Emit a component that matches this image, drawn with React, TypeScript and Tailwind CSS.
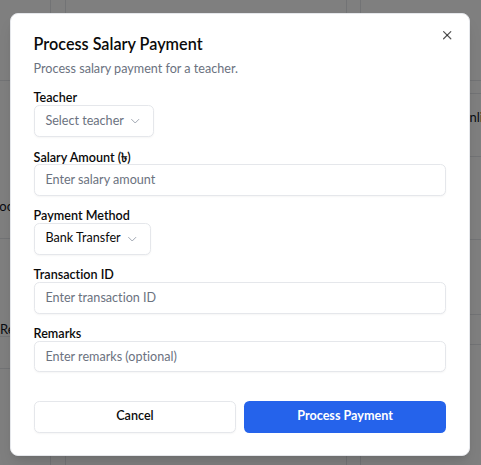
import { ChevronDown, X } from 'lucide-react';

const font = { fontFamily: 'Lato, Inter, "Noto Sans", sans-serif' };

function Label({ children }: { children: React.ReactNode }) {
  return (
    <label className="block text-[12.6px] leading-[12.6px] font-semibold text-[#0a0a0a]">
      {children}
    </label>
  );
}

function SelectBox({ value, placeholder }: { value?: string; placeholder?: string }) {
  return (
    <button
      type="button"
      className="flex h-[32.4px] items-center gap-[4px] rounded-[5.4px] border border-[#e5e7eb] bg-white pl-[10.8px] pr-[10.5px] text-[12.6px] shadow-[0_1px_2px_rgba(0,0,0,0.04)]"
    >
      <span className={value ? 'text-[#0a0a0a]' : 'text-[#6b7280]'}>{value ?? placeholder}</span>
      <ChevronDown className="h-[14.4px] w-[14.4px] text-[#9ca3af]" strokeWidth={1.6} />
    </button>
  );
}

function TextInput({ placeholder }: { placeholder: string }) {
  return (
    <input
      placeholder={placeholder}
      className="block h-[31.5px] w-full rounded-[5.4px] border border-[#e5e7eb] bg-white px-[10.8px] text-[12.6px] text-[#0a0a0a] placeholder:text-[#6b7280] shadow-[0_1px_2px_rgba(0,0,0,0.04)] outline-none"
    />
  );
}

function Background() {
  return (
    <div className="flex h-[465px] w-full bg-white text-[13px] text-[#111827]">
      <div className="flex w-[51px] flex-col border-r border-[#e5e7eb]">
        <div className="h-[81px] border-b border-[#e5e7eb]" />
        <div className="flex h-[158px] items-end border-b border-[#e5e7eb] pb-[22px]">
          <span className="-ml-[9px]">Booo</span>
        </div>
        <div className="flex h-[98px] items-end border-b border-[#e5e7eb]">
          <span className="-mb-[3px]">Reports</span>
        </div>
        <div className="h-[32px] border-b border-[#e5e7eb]" />
      </div>
      <div className="w-[15px] border-r border-[#e5e7eb]" />
      <div className="w-[281px] border-r border-[#e5e7eb]" />
      <div className="w-[14px] border-r border-[#e5e7eb]" />
      <div className="flex flex-1 flex-col">
        <div className="h-[81px] border-b border-[#e5e7eb]" />
        <div className="h-[13px] border-b border-[#e5e7eb]" />
        <div className="flex h-[63px] items-center justify-end border-b border-[#e5e7eb] pb-[14px]">
          <span className="-mr-[16px]">Online</span>
        </div>
        <div className="h-[83px] border-b border-[#e5e7eb]" />
        <div className="h-[75px] border-b border-[#e5e7eb]" />
        <div className="h-[30px] border-b border-[#e5e7eb]" />
      </div>
    </div>
  );
}

export default function App() {
  return (
    <div className="relative h-[465px] w-[481px] overflow-hidden [font-variant-ligatures:none]" style={font}>
      <Background />
      <div className="absolute inset-0 bg-black/50" />

      <div className="absolute left-[10px] top-[13px] w-[460px] rounded-[8px] border border-[#e5e7eb] bg-white px-[22.6px] pt-[22px] pb-[21.6px] shadow-lg">
        <button type="button" className="absolute right-[14.4px] top-[14px] text-[#0a0a0a]/70" aria-label="Close">
          <X className="h-[14.4px] w-[14.4px]" strokeWidth={2} />
        </button>

        <h2 className="text-[16.2px] leading-[16.2px] font-semibold text-[#0a0a0a]">Process Salary Payment</h2>
        <p className="mt-[7.5px] text-[12.6px] leading-[18px] text-[#6b7280]">Process salary payment for a teacher.</p>

        <div className="mt-[14.5px] flex flex-col gap-[14.4px]">
          <div>
            <Label>Teacher</Label>
            <SelectBox placeholder="Select teacher" />
          </div>
          <div>
            <Label>Salary Amount (৳)</Label>
            <TextInput placeholder="Enter salary amount" />
          </div>
          <div>
            <Label>Payment Method</Label>
            <SelectBox value="Bank Transfer" />
          </div>
          <div>
            <Label>Transaction ID</Label>
            <TextInput placeholder="Enter transaction ID" />
          </div>
          <div>
            <Label>Remarks</Label>
            <TextInput placeholder="Enter remarks (optional)" />
          </div>
        </div>

        <div className="mt-[28.5px] grid grid-cols-2 gap-[7.5px]">
          <button
            type="button"
            className="h-[32.6px] rounded-[5.4px] border border-[#e5e7eb] bg-white text-[12.6px] font-semibold text-[#0a0a0a] shadow-[0_1px_2px_rgba(0,0,0,0.04)]"
          >
            Cancel
          </button>
          <button
            type="button"
            className="h-[32.6px] rounded-[5.4px] bg-[#2563eb] text-[12.6px] font-bold text-white"
          >
            Process Payment
          </button>
        </div>
      </div>
    </div>
  );
}
